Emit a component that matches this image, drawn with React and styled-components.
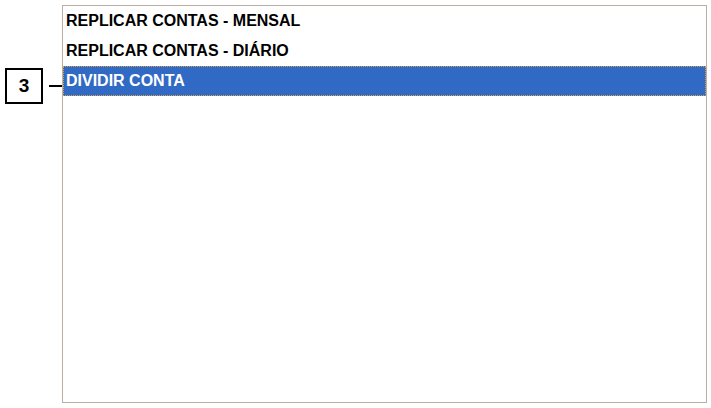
import React from "react";
import styled, { createGlobalStyle } from "styled-components";

const GlobalStyle = createGlobalStyle`
  html, body {
    margin: 0;
    padding: 0;
    background: #ffffff;
  }
`;

const Page = styled.div`
  width: 711px;
  height: 408px;
  display: flex;
  align-items: flex-start;
  padding: 5px 0 0 5px;
  box-sizing: border-box;
  font-family: "Liberation Sans", Arial, sans-serif;
`;

const Annotation = styled.div`
  display: flex;
  align-items: center;
  gap: 6px;
  margin-top: 63px;
`;

const NumberBox = styled.div`
  width: 38px;
  height: 36px;
  box-sizing: border-box;
  border: 2px solid #000;
  display: flex;
  align-items: center;
  justify-content: center;
  font-size: 19px;
  font-weight: bold;
  color: #000;
`;

const Connector = styled.div`
  width: 13px;
  height: 2px;
  background: #000;
`;

const ListBox = styled.ul`
  list-style: none;
  margin: 0;
  padding: 0;
  width: 645px;
  height: 398px;
  box-sizing: border-box;
  border: 1px solid #b9aea6;
  background: #fff;
`;

const Item = styled.li`
  height: 30px;
  display: flex;
  align-items: center;
  padding-left: 3px;
  box-sizing: border-box;
  font-size: 16px;
  font-weight: bold;
  color: ${({ $selected }) => ($selected ? "#fff" : "#000")};
  background: ${({ $selected }) => ($selected ? "#316ac5" : "transparent")};
  outline: ${({ $selected }) => ($selected ? "1px dotted #e3a23d" : "none")};
  outline-offset: -1px;
`;

export default function App() {
  const items = [
    "REPLICAR CONTAS - MENSAL",
    "REPLICAR CONTAS - DIÁRIO",
    "DIVIDIR CONTA",
  ];

  return (
    <>
      <GlobalStyle />
      <Page>
        <Annotation>
          <NumberBox>3</NumberBox>
          <Connector />
        </Annotation>
        <ListBox>
          {items.map((label, i) => (
            <Item key={label} $selected={i === 2}>
              {label}
            </Item>
          ))}
        </ListBox>
      </Page>
    </>
  );
}
